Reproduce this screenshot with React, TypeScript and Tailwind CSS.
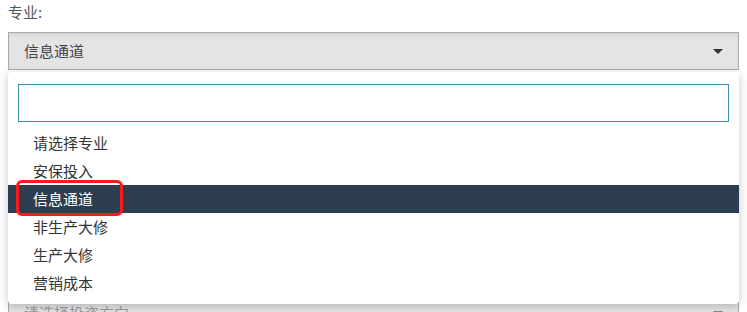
const FONT = { fontFamily: '"Noto Sans CJK SC", "Noto Sans", sans-serif' };

const options = ["请选择专业", "安保投入", "信息通道", "非生产大修", "生产大修", "营销成本"];

function Caret({ className }: { className?: string }) {
  return (
    <svg width="10" height="5" viewBox="0 0 10 5" className={className} aria-hidden>
      <path d="M0 0h10L5 5z" fill="currentColor" />
    </svg>
  );
}

function SelectBox({ value, muted }: { value: string; muted?: boolean }) {
  return (
    <div className="flex h-[38px] items-center justify-between border border-[#aaa] bg-[#e4e4e4] pl-[15px] pr-[15px] shadow-[inset_0_3px_3px_rgba(0,0,0,0.05)]">
      <span className={muted ? "text-[15px] text-[#999]" : "text-[15px] text-[#444]"}>{value}</span>
      <Caret className={muted ? "text-[#888]" : "text-[#333]"} />
    </div>
  );
}

export default function App() {
  const selected = 2;
  return (
    <div className="h-[312px] overflow-hidden bg-white px-2" style={FONT}>
      <div className="relative">
        <div className="text-[15px] leading-[24px] text-[#555]">专业:</div>
        <div className="mt-2">
          <SelectBox value="信息通道" />
        </div>

        {/* open dropdown */}
        <div className="absolute left-0 right-0 top-[72px] z-10 rounded-[4px] bg-white shadow-[0_2px_10px_rgba(0,0,0,0.22)]">
          <div className="px-[10px] pb-[7px] pt-[12px]">
            <div className="h-[38px] border border-[#3c8dbc] bg-white" />
          </div>
          <ul className="pb-[7px]">
            {options.map((o, i) => (
              <li
                key={o}
                className={
                  i === selected
                    ? "flex h-[28px] items-center bg-[#2c3e50] pl-[25px] text-[15px] text-white"
                    : "flex h-[28px] items-center pl-[25px] text-[15px] text-[#333]"
                }
              >
                {o}
              </li>
            ))}
          </ul>
        </div>

        <div className="pointer-events-none absolute left-[8px] top-[180px] z-20 h-[36px] w-[107px] rounded-[6px] border-[3px] border-[#ff1a1a]" />

        <div className="mt-[224px]">
          <SelectBox value="请选择投资方向" muted />
        </div>
      </div>
    </div>
  );
}
